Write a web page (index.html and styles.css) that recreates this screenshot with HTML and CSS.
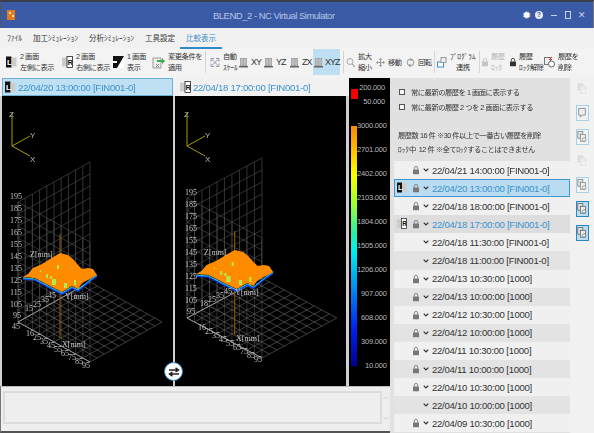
FILE: index.html
```html
<!DOCTYPE html>
<html lang="ja">
<head>
<meta charset="utf-8">
<title>BLEND_2 - NC Virtual Simulator</title>
<link rel="stylesheet" href="styles.css">
</head>
<body>
<svg class="defs" width="0" height="0">
  <defs>
    <symbol id="i-left" viewBox="0 0 11 12"><rect x="0" y="0.5" width="5.5" height="11" fill="#111"/><rect x="5.5" y="1.5" width="5" height="9" fill="#ccc"/><text x="1" y="9" class="ic-t">L</text></symbol>
    <symbol id="i-right" viewBox="0 0 11 12"><rect x="0" y="1.5" width="5" height="9" fill="#ccc"/><rect x="5" y="0.5" width="5.5" height="11" fill="#fff" stroke="#222" stroke-width=".8"/><text x="5.8" y="9" class="ic-r">R</text></symbol>
    <symbol id="i-one" viewBox="0 0 11 12"><rect width="11" height="12" fill="#111"/><path d="M11 0v12H4z" fill="#fff"/><path d="M2 10l3-3M7 5l2-2" stroke="#111"/><rect x="0" y="5" width="4" height="2" fill="#fff"/></symbol>
    <symbol id="i-apply" viewBox="0 0 13 13"><path d="M1 2h8v10H1z" fill="#eee" stroke="#999"/><path d="M4 8l3 3M4 11l3-3" stroke="#888"/><path d="M5 4h5V2l3 3-3 3V6H5z" fill="#3bb04c"/></symbol>
    <symbol id="i-auto" viewBox="0 0 10 10"><path d="M1 1h3M1 1v3M9 1H6M9 1v3M1 9h3M1 9V6M9 9H6M9 9V6M2 2l6 6M8 2l-6 6" stroke="#99a" fill="none"/></symbol>
    <symbol id="i-cube" viewBox="0 0 9 11"><rect x="1" y="1" width="7" height="8" fill="#999"/><path d="M1 3h7M1 5h7M1 7h7M3 1v8M6 1v8" stroke="#ddd" stroke-width=".6"/><rect x="0" y="9" width="9" height="1.5" fill="#666"/></symbol>
    <symbol id="i-zoom" viewBox="0 0 9 10"><circle cx="4" cy="4" r="3" fill="none" stroke="#aaa"/><path d="M6 6l3 3.500" stroke="#aaa" stroke-width="1.300"/></symbol>
    <symbol id="i-move" viewBox="0 0 9 9"><path d="M4.500 0l1.800 2H5v2h2V2.700L9 4.500 7 6.300V5H5v2h1.300L4.500 9 2.700 7H4V5H2v1.300L0 4.500 2 2.700V4h2V2H2.700z" fill="#999"/></symbol>
    <symbol id="i-rot" viewBox="0 0 9 10"><circle cx="4.500" cy="5" r="3.200" fill="none" stroke="#aaa" stroke-width="1.200"/><path d="M4.500 0l2 2-2 2zM4.500 6l-2 2 2 2z" fill="#999"/></symbol>
    <symbol id="i-prog" viewBox="0 0 10 11"><rect x="0.500" y="5" width="6" height="5" fill="#fff" stroke="#3a8ec4"/><rect x="4" y="0.500" width="5" height="5" fill="#eee" stroke="#999"/></symbol>
    <symbol id="i-lock" viewBox="0 0 7 10"><path d="M1.500 4.500V2.800a2 2 0 0 1 4 0V4.500" fill="none" stroke="currentColor"/><rect x="0" y="4.500" width="7" height="5.500" rx=".6" fill="currentColor"/></symbol>
    <symbol id="i-del" viewBox="0 0 11 12"><rect x="0.500" y="1.500" width="6" height="7" fill="#eee" stroke="#777"/><circle cx="7.500" cy="8" r="3" fill="#fff" stroke="#666"/><path d="M5 1l3 3M8 1L5 4" stroke="#d33" stroke-width="1"/></symbol>
    <symbol id="i-hist" viewBox="0 0 12 14"><rect x="1" y="0.500" width="6" height="8" fill="#ddd" stroke="currentColor" stroke-width=".8"/><rect x="4" y="4" width="6" height="8" fill="#eee" stroke="currentColor" stroke-width=".8"/><circle cx="8.500" cy="10" r="2" fill="#fff" stroke="currentColor" stroke-width=".8"/></symbol>
    <symbol id="i-note" viewBox="0 0 12 14"><path d="M2 1.500h8v8H6l-2 2.500V9.500H2z" fill="#eee" stroke="currentColor" stroke-width=".9"/></symbol>
    <symbol id="i-chev" viewBox="0 0 6 4"><path d="M.7.700l2.300 2.300 2.300-2.300" fill="none" stroke="#333" stroke-width="1.200"/></symbol>
    <g id="grid">
      <path class="wall" d="M18 322l0-120m7.200 116l0-120m7.200 116l0-120m7.200 116l0-120m7.200 116l0-120m7.200 116l0-120m7.200 116l0-120m7.200 116l0-120m7.200 116l0-120m7.200 116l0-120m7.200 116l0-120"/>
      <path class="wall" d="M18 322l72-40m-72 28l72-40m-72 28l72-40m-72 28l72-40m-72 28l72-40m-72 28l72-40m-72 28l72-40m-72 28l72-40m-72 28l72-40m-72 28l72-40m-72 28l72-40"/>
      <path class="wall" d="M18 322l0-120m7.200 124l0-120m7.200 124l0-120m7.200 124l0-120m7.200 124l0-120m7.200 124l0-120m7.200 124l0-120m7.200 124l0-120m7.200 124l0-120m7.200 124l0-120m7.200 124l0-120"/>
      <path class="wall" d="M18 322l72 40m-72-52l72 40m-72-52l72 40m-72-52l72 40m-72-52l72 40m-72-52l72 40m-72-52l72 40m-72-52l72 40m-72-52l72 40m-72-52l72 40m-72-52l72 40"/>
      <path class="floor" d="M18 322l72-40m-64.800 44l72-40m-64.800 44l72-40m-64.800 44l72-40m-64.800 44l72-40m-64.800 44l72-40m-64.800 44l72-40m-64.800 44l72-40m-64.800 44l72-40m-64.800 44l72-40m-64.800 44l72-40"/>
      <path class="floor" d="M18 322l72 40m-64.800-44l72 40m-64.800-44l72 40m-64.800-44l72 40m-64.800-44l72 40m-64.800-44l72 40m-64.800-44l72 40m-64.800-44l72 40m-64.800-44l72 40m-64.800-44l72 40m-64.800-44l72 40"/>
      <path class="axis" d="M18 322l72-40M18 322l72 40"/>
    </g>
    <g id="surface">
      <path class="spindle" d="M60 234v104"/>
      <path class="edge-blue" d="M23 279L35 280 50 288 62 294 72 288 78 291 90 281 97 276"/>
      <path class="edge-cyan" d="M23 278L35 279 50 287 62 293 72 287 78 290 90 280 97 275"/>
      <path class="surf" d="M23 277L28 274 33 268 42 264 50 259 60 253 68 255 73 259 78 265 82 269 88 268 93 269 97 275 90 279 82 283 78 289 72 286 62 292 50 286 35 278z"/>
      <path class="speck" d="M57 265h2v4h-2zM50 276h2v3h-2zM52 279h4v6h-4zM46 274h2v4h-2zM64 283h3v5h-3zM74 280h2v5h-2zM40 270h1v2h-1z"/>
    </g>
  </defs>
</svg>
<div class="window">
  <header class="titlebar">
    <svg class="app-logo" width="8" height="10" viewBox="0 0 8 10"><rect width="8" height="10" fill="#e87a1e"/><path d="M2 2h2v2H2zM5 5h2v2H5z" fill="#ffe0b0"/></svg>
    <span class="title-text">BLEND_2 - NC Virtual Simulator</span>
    <div class="win-btns">
      <span class="gear">✹</span>
      <span class="help">?</span>
      <span class="min"></span>
      <span class="max"></span>
      <span class="close">✕</span>
    </div>
  </header>
  <nav class="menu">
    <span>ﾌｧｲﾙ</span><span>加工ｼﾐｭﾚｰｼｮﾝ</span><span>分析ｼﾐｭﾚｰｼｮﾝ</span><span>工具設定</span><span class="active">比較表示</span>
  </nav>
  <div class="toolbar">
    <div class="tool"><svg class="i11"><use href="#i-left"/></svg><span>2 画面<br>左側に表示</span></div>
    <div class="tool"><svg class="i11"><use href="#i-right"/></svg><span>2 画面<br>右側に表示</span></div>
    <div class="tool"><svg class="i11"><use href="#i-one"/></svg><span>1 画面<br>表示</span></div>
    <div class="tool"><svg class="i13"><use href="#i-apply"/></svg><span>変更条件を<br>適用</span></div>
    <i class="sep"></i>
    <div class="tool"><svg class="i10"><use href="#i-auto"/></svg><span>自動<br><em class="hw">ｽｹｰﾙ</em></span></div>
    <div class="tool"><svg class="i9"><use href="#i-cube"/></svg><b>XY</b></div>
    <div class="tool"><svg class="i9"><use href="#i-cube"/></svg><b>YZ</b></div>
    <div class="tool"><svg class="i9"><use href="#i-cube"/></svg><b>ZX</b></div>
    <div class="tool xyz"><svg class="i9"><use href="#i-cube"/></svg><b>XYZ</b></div>
    <i class="sep"></i>
    <div class="tool"><svg class="i9"><use href="#i-zoom"/></svg><span>拡大<br>縮小</span></div>
    <div class="tool"><svg class="i9"><use href="#i-move"/></svg><span>移動</span></div>
    <div class="tool"><svg class="i9"><use href="#i-rot"/></svg><span>回転</span></div>
    <i class="sep"></i>
    <div class="tool"><svg class="i10"><use href="#i-prog"/></svg><span class="ctr"><em class="hw">ﾌﾟﾛｸﾞﾗﾑ</em><br>連携</span></div>
    <i class="sep"></i>
    <div class="tool off"><svg class="lock-t"><use href="#i-lock"/></svg><span>履歴<br><em class="hw">ﾛｯｸ</em></span></div>
    <div class="tool"><svg class="lock-t dark"><use href="#i-lock"/></svg><span>履歴<br><em class="hw">ﾛｯｸ</em>解除</span></div>
    <div class="tool"><svg class="i11"><use href="#i-del"/></svg><span>履歴を<br>削除</span></div>
  </div>
  <div class="main">
    <section class="workspace">
      <div class="views">
        <div class="view">
          <div class="tab selected"><svg class="i11"><use href="#i-left"/></svg><span>22/04/20 13:00:00 [FIN001-0]</span></div>
          <svg class="canvas" viewBox="2 96 171 290">
            <g class="triad"><path d="M12 146v-33M12 146l18-10M12 146l18 10"/></g>
            <text x="9" y="117" class="lb">Z</text><text x="30" y="138" class="lb">Y</text><text x="30" y="162" class="lb">X</text>
            <use href="#grid"/><use href="#surface"/>
            <text x="10" y="199" class="ax">195</text><text x="10" y="211" class="ax">185</text><text x="10" y="223" class="ax">175</text><text x="10" y="235" class="ax">165</text><text x="10" y="247" class="ax">155</text><text x="10" y="259" class="ax">145</text><text x="10" y="271" class="ax">135</text><text x="10" y="283" class="ax">125</text><text x="10" y="295" class="ax">115</text><text x="10" y="307" class="ax">105</text><text x="13" y="318" class="ax">95</text>
            <text x="30" y="257" class="ax">Z[mm]</text><text x="65" y="299" class="ax">Y[mm]</text><text x="62" y="347" class="ax">X[mm]</text>
            <text x="12" y="329" class="ax">45</text><text x="25" y="311" class="ax">15</text><text x="33" y="307" class="ax">25</text><text x="41" y="302" class="ax">35</text><text x="48" y="298" class="ax">45</text>
            <text x="26" y="336" class="ax">16</text><text x="33" y="340" class="ax">25</text><text x="40" y="344" class="ax">35</text><text x="47" y="348" class="ax">45</text><text x="54" y="352" class="ax">55</text><text x="61" y="356" class="ax">65</text><text x="68" y="360" class="ax">75</text><text x="75" y="364" class="ax">85</text><text x="82" y="368" class="ax">95</text>
          </svg>
        </div>
        <div class="view second">
          <div class="tab right"><svg class="i11"><use href="#i-right"/></svg><span>22/04/18 17:00:00 [FIN001-0]</span></div>
          <svg class="canvas" viewBox="175 96 171 290">
            <g class="triad"><path d="M187 146v-33M187 146l18-10M187 146l18 10"/></g>
            <text x="184" y="117" class="lb">Z</text><text x="205" y="138" class="lb">Y</text><text x="205" y="162" class="lb">X</text>
            <use href="#grid" transform="translate(168.300 -4) scale(1.040 1)"/>
            <use href="#surface" transform="translate(172.300 -3) scale(1.040 1)"/>
            <text x="185" y="195" class="ax">195</text><text x="185" y="207" class="ax">185</text><text x="185" y="219" class="ax">175</text><text x="185" y="231" class="ax">165</text><text x="185" y="243" class="ax">155</text><text x="185" y="255" class="ax">145</text><text x="185" y="267" class="ax">135</text><text x="185" y="279" class="ax">125</text><text x="185" y="291" class="ax">115</text><text x="185" y="303" class="ax">105</text><text x="187" y="314" class="ax">95</text>
            <text x="204" y="255" class="ax">Z[mm]</text><text x="235" y="295" class="ax">Y[mm]</text><text x="236" y="341" class="ax">X[mm]</text>
            <text x="200" y="306" class="ax">18</text><text x="208" y="302" class="ax">25</text><text x="216" y="298" class="ax">35</text><text x="224" y="294" class="ax">45</text>
            <text x="198" y="330" class="ax">16</text><text x="205" y="334" class="ax">25</text><text x="212" y="338" class="ax">35</text><text x="219" y="342" class="ax">45</text><text x="226" y="346" class="ax">55</text><text x="233" y="350" class="ax">65</text><text x="240" y="354" class="ax">75</text><text x="247" y="358" class="ax">85</text><text x="254" y="362" class="ax">95</text>
          </svg>
        </div>
        <aside class="legend">
          <div class="limits"><i class="red"></i><div class="limit-vals"><span>200.000</span><span>50.000</span></div></div>
          <div class="scale">
            <i class="ramp"></i>
            <div class="ticks"><span>3000.000</span><span>2701.000</span><span>2402.000</span><span>2103.000</span><span>1804.000</span><span>1505.000</span><span>1206.000</span><span>907.000</span><span>608.000</span><span>309.000</span><span>10.000</span></div>
          </div>
        </aside>
        <button class="swap" aria-label="入れ替え"><svg width="12" height="10" viewBox="0 0 12 10"><path d="M1 3h9M7.500 .8L10.500 3 7.500 5M11 7H2M4.500 5L1.500 7 4.500 9.200" fill="none" stroke="#222" stroke-width="1.500"/></svg></button>
      </div>
      <div class="log">
        <div class="log-box"></div>
        <div class="log-scroll"><span>︿</span><span>﹀</span></div>
      </div>
    </section>
    <section class="history">
      <label class="check first"><i></i>常に最新の履歴を 1 画面に表示する</label>
      <label class="check"><i></i>常に最新の履歴 2 つを 2 画面に表示する</label>
      <p class="info">履歴数 16 件 ※30 件以上で一番古い履歴を削除<br><em class="hw">ﾛｯｸ</em>中&nbsp; 12 件 ※全て<em class="hw">ﾛｯｸ</em>することはできません</p>
      <ul class="rows">
        <li><svg class="lk"><use href="#i-lock"/></svg><svg class="chev"><use href="#i-chev"/></svg>22/04/21 14:00:00 [FIN001-0]</li>
        <li class="sel"><svg class="mark"><use href="#i-left"/></svg><svg class="lk"><use href="#i-lock"/></svg><svg class="chev"><use href="#i-chev"/></svg>22/04/20 13:00:00 [FIN001-0]</li>
        <li><svg class="lk"><use href="#i-lock"/></svg><svg class="chev"><use href="#i-chev"/></svg>22/04/18 18:00:00 [FIN001-0]</li>
        <li class="cur"><svg class="mark"><use href="#i-right"/></svg><svg class="lk"><use href="#i-lock"/></svg><svg class="chev"><use href="#i-chev"/></svg>22/04/18 17:00:00 [FIN001-0]</li>
        <li><svg class="chev"><use href="#i-chev"/></svg>22/04/18 11:30:00 [FIN001-0]</li>
        <li><svg class="chev"><use href="#i-chev"/></svg>22/04/18 11:00:00 [FIN001-0]</li>
        <li><svg class="lk"><use href="#i-lock"/></svg><svg class="chev"><use href="#i-chev"/></svg>22/04/13 10:30:00 [1000]</li>
        <li><svg class="lk"><use href="#i-lock"/></svg><svg class="chev"><use href="#i-chev"/></svg>22/04/13 10:00:00 [1000]</li>
        <li><svg class="lk"><use href="#i-lock"/></svg><svg class="chev"><use href="#i-chev"/></svg>22/04/12 10:30:00 [1000]</li>
        <li><svg class="lk"><use href="#i-lock"/></svg><svg class="chev"><use href="#i-chev"/></svg>22/04/12 10:00:00 [1000]</li>
        <li><svg class="lk"><use href="#i-lock"/></svg><svg class="chev"><use href="#i-chev"/></svg>22/04/11 10:30:00 [1000]</li>
        <li><svg class="lk"><use href="#i-lock"/></svg><svg class="chev"><use href="#i-chev"/></svg>22/04/11 10:00:00 [1000]</li>
        <li><svg class="lk"><use href="#i-lock"/></svg><svg class="chev"><use href="#i-chev"/></svg>22/04/10 10:30:00 [1000]</li>
        <li><svg class="chev"><use href="#i-chev"/></svg>22/04/10 10:00:00 [1000]</li>
        <li><svg class="lk"><use href="#i-lock"/></svg><svg class="chev"><use href="#i-chev"/></svg>22/04/09 10:30:00 [1000]</li>
      </ul>
    </section>
    <aside class="side">
      <span class="s-btn faded"><svg class="hist"><use href="#i-hist"/></svg></span>
      <span class="s-btn boxed light"><svg class="hist"><use href="#i-note"/></svg></span>
      <span class="s-btn boxed light"><svg class="hist"><use href="#i-hist"/></svg></span>
      <span class="s-btn faded"><svg class="hist"><use href="#i-hist"/></svg></span>
      <span class="s-btn boxed light"><svg class="hist"><use href="#i-hist"/></svg></span>
      <span class="s-btn boxed strong"><svg class="hist"><use href="#i-hist"/></svg></span>
      <span class="s-btn boxed strong"><svg class="hist"><use href="#i-hist"/></svg></span>
    </aside>
  </div>
</div>
</body>
</html>
```

FILE: styles.css
```css
* { box-sizing: border-box; }
html, body { margin: 0; padding: 0; }
body {
  width: 594px;
  height: 433px;
  overflow: hidden;
  background: #f1f1f1;
  color: #222;
  font-family: "Liberation Sans", "Noto Sans CJK JP", sans-serif;
}
.defs { position: absolute; }
.ic-t { font: bold 8px "Liberation Sans", sans-serif; fill: #fff; }
.ic-r { font: bold 7px "Liberation Sans", sans-serif; fill: #111; }
em.hw { font-style: normal; letter-spacing: 0; }

.window {
  width: 594px;
  height: 433px;
  display: flex;
  flex-direction: column;
  filter: blur(0.35px);
}

/* title bar */
.titlebar {
  height: 28px;
  flex: none;
  display: flex;
  align-items: center;
  padding: 0 0 0 6px;
  background: #3b5aa6;
  border-top: 2px solid #3a3f4a;
  border-left: 1px solid #555;
  border-right: 1px solid #777;
}
.title-text {
  margin-left: 198px;
  font-size: 9.500px;
  letter-spacing: -0.5px;
  color: #b4c4e4;
  white-space: nowrap;
}
.win-btns {
  margin-left: auto;
  display: flex;
  align-items: center;
  padding-right: 6px;
  color: #dfe6f5;
}
.gear { width: 12px; font-size: 11px; color: #fff; text-align: center; margin-right: 3px; }
.help {
  width: 8px; height: 8px; border-radius: 50%;
  background: #e8edf8; color: #3b5aa6;
  font-size: 7px; font-weight: bold; line-height: 8px; text-align: center;
  margin-right: 8px;
}
.min { width: 6px; height: 1px; background: #c8d3ea; margin-right: 8px; }
.max { width: 6px; height: 8px; border: 1px solid #c8d3ea; margin-right: 7px; }
.close { width: 9px; font-size: 9px; color: #c8d3ea; }

/* menu */
.menu {
  height: 20px;
  flex: none;
  display: flex;
  align-items: center;
  gap: 11px;
  padding: 0 0 2px 7px;
  background: #f1f1f1;
  font-size: 7.500px;
  color: #333;
}
.menu .active {
  color: #3f8fc4;
  position: relative;
}
.menu .active::after {
  content: "";
  position: absolute;
  left: -6px;
  right: -6px;
  bottom: -6px;
  height: 1.500px;
  background: #2f8ccb;
}

/* toolbar */
.toolbar {
  height: 30px;
  flex: none;
  display: grid;
  grid-template-columns: 56px 51px 39px 53px 5px 29px 25px 26px 23px 30px 3px 30px 30px 28px 3px 42px 3px 28px 34px 1fr;
  padding: 1px 0 3px 6px;
  background: #f3f3f3;
  font-size: 7.300px;
  letter-spacing: -0.5px;
  line-height: 11px;
  color: #333;
}
.tool { display: flex; align-items: center; gap: 3px; white-space: nowrap; }
.tool b { font-weight: normal; font-size: 9px; letter-spacing: -1px; color: #333; }
.tool .ctr { text-align: center; }
.tool.off { color: #b5b5b5; }
.tool.xyz { background: #bedff1; width: 27px; gap: 2px; padding-left: 1px; }
.sep { width: 1px; background: #d4d4d4; margin: 2px 0; }
.i9 { width: 9px; height: 11px; flex: none; }
.i10 { width: 10px; height: 11px; flex: none; }
.i11 { width: 11px; height: 12px; flex: none; }
.i13 { width: 13px; height: 13px; flex: none; }
.lock-t { width: 6px; height: 10px; flex: none; color: #c4c4c4; }
.lock-t.dark { color: #333; }

/* layout */
.main { flex: 1; display: flex; min-height: 0; }
.workspace { width: 390px; flex: none; display: flex; flex-direction: column; }
.views {
  height: 308px;
  flex: none;
  display: flex;
  position: relative;
  padding-left: 2px;
  background: linear-gradient(#f1f1f1 18px, #cfcfcf 18px);
}
.view { width: 171px; flex: none; display: flex; flex-direction: column; }
.view.second { margin-left: 2px; }
.tab {
  height: 18px;
  flex: none;
  display: flex;
  align-items: center;
  gap: 2px;
  padding-left: 3px;
  background: #f1f1f1;
  font-size: 9.600px;
  letter-spacing: -0.28px;
  color: #3b93cf;
}
.tab.right { padding-left: 5px; }
.tab.selected { background: #bfe0f2; border: 1px solid #6fb0d6; padding-left: 2px; }
.canvas { display: block; width: 171px; height: 290px; background: #000; }
.wall { fill: none; stroke: #474747; stroke-width: .7; }
.floor { fill: none; stroke: #585858; stroke-width: .7; }
.axis { fill: none; stroke: #a8a8a8; stroke-width: .8; }
.spindle { fill: none; stroke: #a05c00; stroke-width: 1; }
.edge-blue { fill: none; stroke: #0a3ff0; stroke-width: 1.600; }
.edge-cyan { fill: none; stroke: #25d8e8; stroke-width: .9; }
.surf { fill: #ff8c00; }
.speck { fill: #b6e84a; }
.triad path { fill: none; stroke: #a39c00; stroke-width: 1; }
.lb { font: 8px "Liberation Sans", sans-serif; fill: #bbb; }
.ax { font: 8px "Liberation Serif", serif; fill: #c4c4c4; }

/* legend */
.legend {
  width: 41px;
  flex: none;
  margin-left: 3px;
  background: #000;
  color: #b8b8b8;
  font-size: 7.500px;
  font-family: "Liberation Sans", sans-serif;
  letter-spacing: -0.2px;
  border-left: 1px solid #000;
}
.limits { height: 42px; padding-top: 5px; display: flex; }
.red { width: 7px; height: 10px; margin: 6px 0 0 1px; background: #f40000; flex: none; }
.limit-vals {
  flex: 1;
  display: flex;
  flex-direction: column;
  text-align: right;
  padding-right: 5px;
  gap: 4px;
  line-height: 10px;
}
.scale { display: flex; height: 246px; padding-top: 6px; }
.ramp {
  width: 6px;
  height: 240px;
  flex: none;
  margin-left: 1px;
  background: linear-gradient(#f68a10 0%, #ffb000 8%, #ffff00 20%, #a0ff30 32%, #30f0a0 44%, #00f0f0 52%, #00b0f0 62%, #0070f0 72%, #0020f0 85%, #000090 100%);
}
.ticks {
  flex: 1;
  display: flex;
  flex-direction: column;
  justify-content: space-between;
  text-align: right;
  padding-right: 5px;
  margin-top: -5px;
  margin-bottom: -5px;
  line-height: 10px;
}
.swap {
  position: absolute;
  left: 164px;
  top: 284px;
  width: 19px;
  height: 19px;
  padding: 0;
  border: 1.500px solid #2f8ccb;
  border-radius: 50%;
  background: #fff;
  display: flex;
  align-items: center;
  justify-content: center;
}

/* log */
.log {
  flex: 1;
  display: flex;
  background: #eeeeee;
  padding: 4px 0 0 2px;
  border-top: 1px solid #bbb;
  border-bottom: 2px solid #555;
  border-left: 1px solid #777;
}
.log-box { width: 379px; height: 33px; border: 2px solid #dcdcdc; background: #eee; }
.log-scroll {
  flex: 1;
  height: 33px;
  display: flex;
  flex-direction: column;
  justify-content: space-between;
  align-items: center;
  font-size: 6px;
  color: #c5c5c5;
}

/* history */
.history {
  width: 180px;
  flex: none;
  background: #e1e1e1;
  display: flex;
  flex-direction: column;
  padding: 0 0 0 4px;
  font-size: 7.300px;
  letter-spacing: -0.5px;
  color: #333;
}
.check {
  height: 15px;
  display: flex;
  align-items: center;
  gap: 6px;
  padding-left: 5px;
  white-space: nowrap;
}
.check.first { margin-top: 6px; }
.check i { width: 6px; height: 6px; border: 1px solid #555; background: #f6f6f6; flex: none; }
.info {
  margin: 15px 0 0 0;
  padding-left: 4px;
  line-height: 14px;
  height: 32px;
  white-space: nowrap;
}
.rows { list-style: none; margin: 0; padding: 0; flex: 1; }
.rows li {
  height: 18.100px;
  display: flex;
  align-items: center;
  position: relative;
  padding-left: 38px;
  font-size: 9.600px;
  letter-spacing: -0.28px;
  color: #333;
  background: #f0f0f0;
  white-space: nowrap;
}
.rows li:nth-child(even) { background: #e3e3e3; }
.rows li.sel { background: #b9dcf0; border: 1px solid #3d97d1; padding-left: 37px; color: #3b93cf; }
.rows li.cur { color: #3b93cf; background: #dddddd; }
.lk { position: absolute; left: 19px; top: 4px; width: 6px; height: 10px; color: #777; }
.sel .lk { left: 18px; top: 3px; }
.chev { width: 6px; height: 4px; flex: none; margin-right: 3px; margin-left: -9px; }
.mark { position: absolute; left: 3px; top: 3px; width: 10px; height: 11px; }
.sel .mark { left: 2px; top: 2px; }

/* side strip */
.side {
  flex: 1;
  background: #f1f1f1;
  display: flex;
  flex-direction: column;
  align-items: center;
  padding-top: 3px;
  gap: 8px;
}
.s-btn { width: 13px; height: 16px; display: flex; align-items: center; justify-content: center; color: #777; }
.s-btn.faded { color: #ddd; }
.s-btn.boxed { border: 1px solid #5aa8d8; background: #e2eff7; }
.s-btn.light { border-color: #a8d0e8; background: #eef4f8; }
.s-btn.strong { border: 1.500px solid #2a87c5; background: #bcdcf0; color: #555; }
.hist { width: 10px; height: 12px; }
```
